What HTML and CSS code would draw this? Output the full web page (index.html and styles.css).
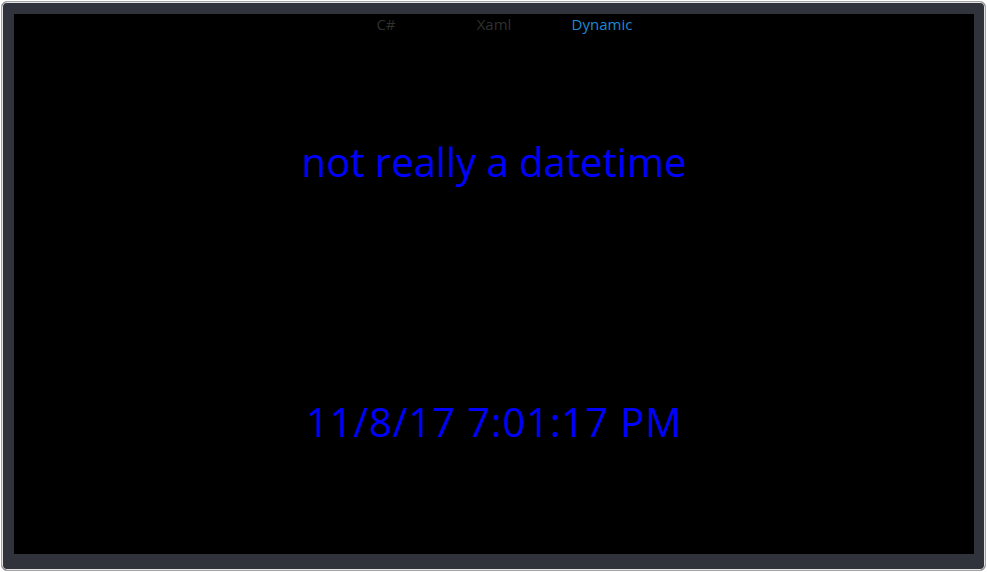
FILE: index.html
```html
<!DOCTYPE html>
<html>
<head>
<meta charset="utf-8">
<link rel="stylesheet" href="styles.css">
</head>
<body>
<div class="window">
  <div class="screen">
    <div class="tabs">
      <span class="tab">C#</span>
      <span class="tab">Xaml</span>
      <span class="tab active">Dynamic</span>
    </div>
    <div class="content">
      <div class="label first">not really a datetime</div>
      <div class="label second">11/8/17 7:01:17 PM</div>
    </div>
  </div>
</div>
</body>
</html>
```
FILE: styles.css
```css
html, body {
  margin: 0;
  padding: 0;
  background: #ffffff;
}
.window {
  box-sizing: border-box;
  margin: 1px;
  width: 985px;
  height: 570px;
  border: 1px solid #a4a4a4;
  border-radius: 6px;
  box-shadow: inset 0 0 0 1px #e2e2e2;
  background: #30333b;
  padding: 12px 11px 16px 12px;
}
.screen {
  width: 960px;
  height: 540px;
  background: #000000;
  display: flex;
  flex-direction: column;
  font-family: "Open Sans", "Noto Sans", sans-serif;
}
.tabs {
  display: flex;
  justify-content: center;
  height: 24px;
}
.tab {
  width: 108px;
  text-align: center;
  font-size: 15px;
  line-height: 21px;
  color: #303030;
}
.tab.active {
  color: #1a8ad4;
}
.content {
  flex: 1;
  display: flex;
  flex-direction: column;
  align-items: center;
}
.label {
  color: #0000ff;
  font-size: 40px;
  line-height: 50px;
}
.first {
  margin-top: 99px;
}
.second {
  margin-top: 210px;
  letter-spacing: 0.9px;
}
```
